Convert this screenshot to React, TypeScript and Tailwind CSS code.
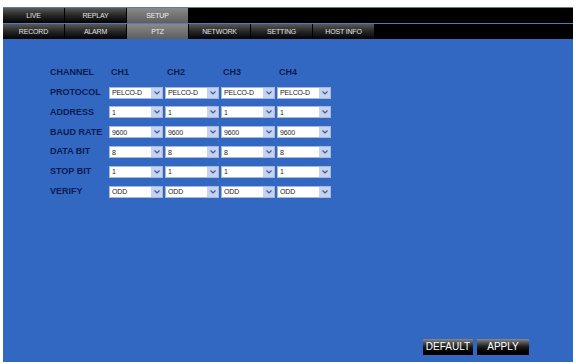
import React from 'react';

const topTabs = ['LIVE', 'REPLAY', 'SETUP'];
const subTabs = ['RECORD', 'ALARM', 'PTZ', 'NETWORK', 'SETTING', 'HOST INFO'];

const rows: { label: string; value: string }[] = [
  { label: 'PROTOCOL', value: 'PELCO-D' },
  { label: 'ADDRESS', value: '1' },
  { label: 'BAUD RATE', value: '9600' },
  { label: 'DATA BIT', value: '8' },
  { label: 'STOP BIT', value: '1' },
  { label: 'VERIFY', value: 'ODD' },
];

const Tab = ({ text, active }: { text: string; active: boolean }) => (
  <div
    className={
      active
        ? 'w-[61px] h-full flex items-center justify-center bg-gradient-to-b from-[#8a8a8a] to-[#5e5e5e] text-[#f0f0f0]'
        : 'w-[61px] h-full flex items-center justify-center bg-gradient-to-b from-[#5a5a5a] via-[#262626] to-[#050505] text-[#e0e0e0]'
    }
  >
    <span className="text-[7px] leading-none tracking-tight">{text}</span>
  </div>
);

const Select = ({ value }: { value: string }) => (
  <div className="w-[54px] h-[12px] flex bg-white border border-[#a8b8d8]">
    <div className="flex-1 flex items-center pl-[2px] text-[7px] leading-none font-normal text-[#222] tracking-tight">
      {value}
    </div>
    <div className="w-[11px] h-full bg-[#c6d3ef] flex items-center justify-center">
      <svg width="6" height="4" viewBox="0 0 6 4">
        <path d="M0.5 0.5 L3 3 L5.5 0.5" fill="none" stroke="#3e5aa0" strokeWidth="1.2" />
      </svg>
    </div>
  </div>
);

export default function App() {
  return (
    <div className="w-[576px] h-[364px] bg-white overflow-hidden" style={{ fontFamily: '"Liberation Sans", Arial, sans-serif' }}>
      <div className="ml-[3px] mt-[7px] w-[570px] h-[355px] flex flex-col bg-[#3268c2]">
        {/* top tab bar */}
        <div className="h-[16px] flex gap-[1px] bg-black border-t border-[#5b79b2]">
          {topTabs.map((t) => (
            <Tab key={t} text={t} active={t === 'SETUP'} />
          ))}
        </div>
        <div className="h-[16px] flex gap-[1px] bg-black border-t border-[#5b79b2]">
          {subTabs.map((t) => (
            <Tab key={t} text={t} active={t === 'PTZ'} />
          ))}
        </div>

        {/* PTZ settings */}
        <div className="flex-1 flex flex-col pl-[47px] pt-[24px]">
          <div className="grid grid-cols-[59px_56px_56px_56px_56px] auto-rows-[19.8px] items-center text-[9px] font-bold text-[#0c1b4f]">
            <div>CHANNEL</div>
            <div className="pl-[2px]">CH1</div>
            <div className="pl-[2px]">CH2</div>
            <div className="pl-[2px]">CH3</div>
            <div className="pl-[2px]">CH4</div>
            {rows.map((r) => (
              <React.Fragment key={r.label}>
                <div>{r.label}</div>
                <Select value={r.value} />
                <Select value={r.value} />
                <Select value={r.value} />
                <Select value={r.value} />
              </React.Fragment>
            ))}
          </div>

          <div className="mt-auto mb-[7px] mr-[44px] flex justify-end gap-[4px]">
            <button className="w-[50px] h-[16px] bg-gradient-to-b from-[#8a8a8a] via-[#1a1a1a] to-black text-white text-[10px] leading-none">
              DEFAULT
            </button>
            <button className="w-[52px] h-[16px] bg-gradient-to-b from-[#8a8a8a] via-[#1a1a1a] to-black text-white text-[10px] leading-none">
              APPLY
            </button>
          </div>
        </div>
      </div>
    </div>
  );
}
